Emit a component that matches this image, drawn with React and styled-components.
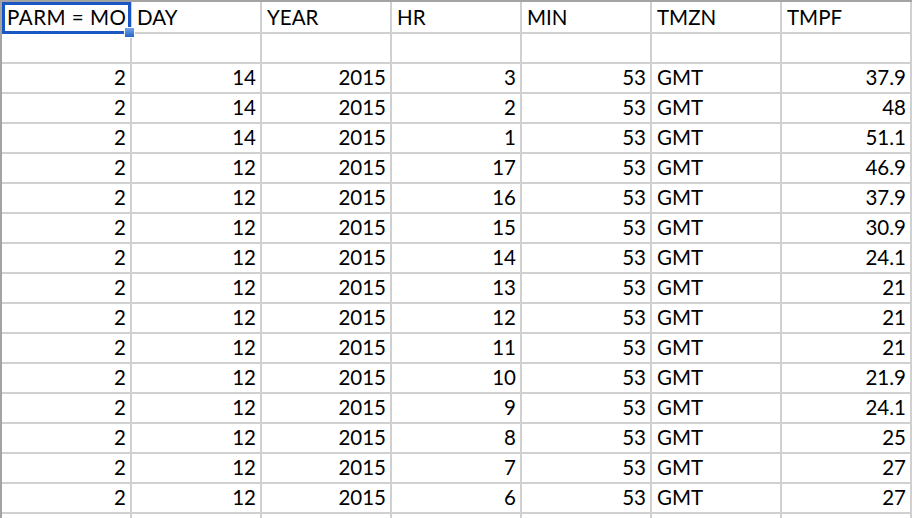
import React from "react";
import styled, { createGlobalStyle } from "styled-components";

const GlobalStyle = createGlobalStyle`
  html, body {
    margin: 0;
    padding: 0;
    background: #ffffff;
  }
  body {
    font-family: Lato, "Open Sans", sans-serif;
  }
`;

const Frame = styled.div`
  width: 912px;
  height: 518px;
  overflow: hidden;
  background: #ffffff;
`;

const Sheet = styled.div`
  display: grid;
  grid-template-columns: repeat(7, 130px);
  border-top: 2px solid #a3a3a3;
  border-left: 2px solid #a3a3a3;
`;

const Cell = styled.div`
  position: relative;
  box-sizing: border-box;
  height: ${({ $first }) => ($first ? "32px" : "30px")};
  border-right: 2px solid #d0d0d0;
  border-bottom: 2px solid #d0d0d0;
  display: flex;
  align-items: flex-end;
  justify-content: ${({ $num }) => ($num ? "flex-end" : "flex-start")};
  padding: 0 4px 5px 5px;
  font-size: 20.5px;
  line-height: 1;
  color: #000000;
  white-space: nowrap;
  overflow: ${({ $selected }) => ($selected ? "visible" : "hidden")};
`;

const Clip = styled.span`
  display: block;
  overflow: hidden;
  max-width: 122px;
  letter-spacing: 0.5px;
`;

const Selection = styled.div`
  position: absolute;
  left: 0;
  top: 0;
  width: 129px;
  height: 32px;
  box-sizing: border-box;
  border: 3px solid #1b57c4;
  pointer-events: none;
`;

const Handle = styled.div`
  position: absolute;
  left: 122px;
  top: 25px;
  width: 11px;
  height: 11px;
  box-sizing: border-box;
  border: 1px solid #ffffff;
  background: linear-gradient(#74a6ea, #2563c6);
  z-index: 2;
`;

const headers = ["PARM = MONTH", "DAY", "YEAR", "HR", "MIN", "TMZN", "TMPF"];

const rows = [
  [2, 14, 2015, 3, 53, "GMT", 37.9],
  [2, 14, 2015, 2, 53, "GMT", 48],
  [2, 14, 2015, 1, 53, "GMT", 51.1],
  [2, 12, 2015, 17, 53, "GMT", 46.9],
  [2, 12, 2015, 16, 53, "GMT", 37.9],
  [2, 12, 2015, 15, 53, "GMT", 30.9],
  [2, 12, 2015, 14, 53, "GMT", 24.1],
  [2, 12, 2015, 13, 53, "GMT", 21],
  [2, 12, 2015, 12, 53, "GMT", 21],
  [2, 12, 2015, 11, 53, "GMT", 21],
  [2, 12, 2015, 10, 53, "GMT", 21.9],
  [2, 12, 2015, 9, 53, "GMT", 24.1],
  [2, 12, 2015, 8, 53, "GMT", 25],
  [2, 12, 2015, 7, 53, "GMT", 27],
  [2, 12, 2015, 6, 53, "GMT", 27],
];

const empty = ["", "", "", "", "", "", ""];

const App = () => {
  const body = [empty, ...rows, empty];

  return (
    <Frame>
      <GlobalStyle />
      <Sheet>
        {headers.map((h, i) =>
          i === 0 ? (
            <Cell key={h} $first $selected>
              <Clip>{h}</Clip>
              <Selection />
              <Handle />
            </Cell>
          ) : (
            <Cell key={h} $first>
              {h}
            </Cell>
          )
        )}
        {body.map((row, r) =>
          row.map((v, c) => (
            <Cell key={`${r}-${c}`} $num={typeof v === "number"}>
              {v}
            </Cell>
          ))
        )}
      </Sheet>
    </Frame>
  );
};

export default App;
